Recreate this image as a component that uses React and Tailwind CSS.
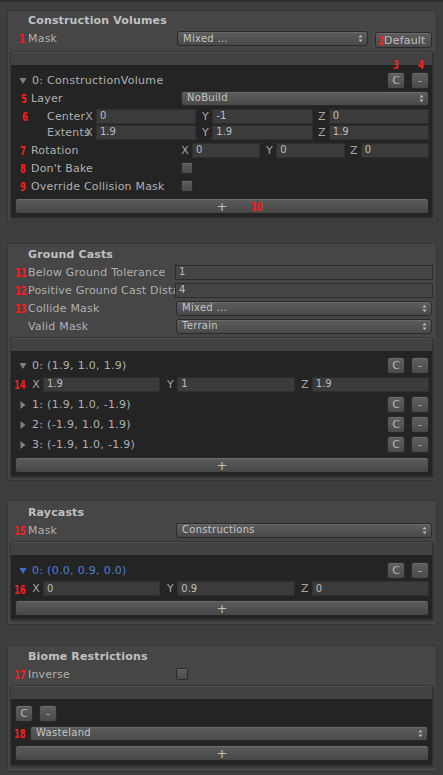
import React from 'react';

const redFont = "font-bold text-[#ff1a1a] font-['DejaVu_Sans_Condensed','Liberation_Sans_Narrow',sans-serif] scale-x-[0.72] origin-left";

function Num({ n, className = '' }) {
  return (
    <span className={`absolute top-1/2 -translate-y-1/2 text-[13px] leading-none ${redFont} ${className}`}>
      {n}
    </span>
  );
}

function Arrows() {
  return (
    <svg width="5" height="9" viewBox="0 0 5 9" className="shrink-0">
      <path d="M0.5 3.5 L2.5 0.8 L4.5 3.5Z M0.5 5.5 L2.5 8.2 L4.5 5.5Z" fill="#b8b8b8" />
    </svg>
  );
}

function Dropdown({ text, className = '' }) {
  return (
    <div className={`flex items-center justify-between h-[15px] pl-[5px] pr-[4px] rounded-[3px] border border-[#2a2a2a] bg-linear-to-b from-[#5d5d5d] to-[#4a4a4a] shadow-[inset_0_1px_0_#6a6a6a] text-[10px] tracking-[0.3px] text-[#c4c4c4] ${className}`}>
      <span className="truncate leading-none">{text}</span>
      <Arrows />
    </div>
  );
}

function Btn({ children, className = '' }) {
  return (
    <div className={`flex items-center justify-center w-[18px] h-[17px] rounded-[3px] border border-[#2a2a2a] bg-linear-to-b from-[#5f5f5f] to-[#4b4b4b] shadow-[inset_0_1px_0_#6c6c6c] text-[11px] text-[#b5b5b5] leading-none ${className}`}>
      {children}
    </div>
  );
}

function Field({ value, className = '', light }) {
  return (
    <div className={`flex items-center h-[15px] pl-[3px] border text-[10px] text-[#bebebe] leading-none ${light ? 'bg-[#454545] border-[#2c2c2c]' : 'bg-[#3b3b3b] border-[#2f2f2f]'} ${className}`}>
      {value}
    </div>
  );
}

function Check({ className = '' }) {
  return (
    <div className={`w-[12px] h-[12px] rounded-[2px] border border-[#2a2a2a] bg-linear-to-b from-[#5c5c5c] to-[#4a4a4a] shadow-[inset_0_1px_0_#6a6a6a] ${className}`} />
  );
}

function Vec3({ values, className = '', gap = 'gap-[2px]' }) {
  return (
    <div className={`flex ${gap} ${className}`}>
      {['X', 'Y', 'Z'].map((a, i) => (
        <div key={a} className="flex-1 flex items-center min-w-0">
          <span className="w-[14px] shrink-0 text-center text-[11px] text-[#a6a6a6] leading-none">{a}</span>
          <Field value={values[i]} className="flex-1 min-w-0" />
        </div>
      ))}
    </div>
  );
}

function Tri({ open, blue }) {
  return (
    <svg width="8" height="8" viewBox="0 0 8 8" className="shrink-0">
      {open ? (
        <path d="M0.5 1 L7.5 1 L4 7Z" fill={blue ? '#3f6fd8' : '#808080'} />
      ) : (
        <path d="M1.5 0 L6.5 4 L1.5 8Z" fill="#808080" />
      )}
    </svg>
  );
}

function Plus({ className = '', children }) {
  return (
    <div className={`relative mx-[4px] mr-[3px] h-[16px] flex items-center justify-center rounded-[3px] border border-[#262626] bg-linear-to-b from-[#5c5c5c] to-[#474747] shadow-[inset_0_1px_0_#6a6a6a] text-[13px] text-[#c0c0c0] leading-none ${className}`}>
      +
      {children}
    </div>
  );
}

function Section({ title, className = '', children }) {
  return (
    <div className={`ml-[7px] mr-[6px] border border-[#363636] bg-[#464646] ${className}`}>
      <div className="pl-[20px] h-[14px] flex items-center font-bold text-[11px] tracking-[0.15px] text-[#c0c0c0] leading-none title-row">
        {title}
      </div>
      {children}
    </div>
  );
}

function Inner({ className = '', children }) {
  return (
    <div className={`relative ml-[2px] mr-[3px] rounded-t-[3px] border border-[#353535] bg-[#242424] shadow-[1px_1px_2px_rgba(0,0,0,0.35)] ${className}`}>
      <div className="h-[13px] bg-[#424242] rounded-t-[2px] border-t border-[#4e4e4e]" />
      {children}
    </div>
  );
}

function SRow({ label, num, numClass, className = '', children }) {
  return (
    <div className={`relative flex items-center h-[16px] pl-[20px] pr-[4px] ${className}`}>
      {num && <Num n={num} className={numClass} />}
      <span className="w-[148px] shrink-0 overflow-hidden whitespace-nowrap text-[11px] tracking-[0.2px] text-[#b0b0b0] leading-none">{label}</span>
      {children}
    </div>
  );
}

function IRow({ label, num, numClass = 'left-[9px]', className = '', labelClass = 'w-[150px]', pl = 'pl-[20px]', children }) {
  return (
    <div className={`relative flex items-center h-[16px] ${pl} pr-[3px] ${className}`}>
      {num && <Num n={num} className={numClass} />}
      <span className={`${labelClass} shrink-0 whitespace-nowrap text-[11px] tracking-[0.2px] text-[#b0b0b0] leading-none`}>{label}</span>
      {children}
    </div>
  );
}

function ElemRow({ text, open, blue, className = '', buttons = true }) {
  return (
    <div className={`flex items-center h-[17px] pl-[8px] pr-[3px] ${className}`}>
      <Tri open={open} blue={blue} />
      <span className={`ml-[5px] flex-1 text-[11px] tracking-[0.3px] leading-none ${blue ? 'text-[#4f7fdc]' : 'text-[#b0b0b0]'}`}>{text}</span>
      {buttons && (
        <div className="flex gap-[6px]">
          <Btn>C</Btn>
          <Btn>-</Btn>
        </div>
      )}
    </div>
  );
}

export default function App() {
  return (
    <div className="min-h-[775px] w-[443px] bg-[#3e3e3e] border-t-2 border-[#2d2d2d] pt-[8px] pb-[3px] font-['DejaVu_Sans','Liberation_Sans',sans-serif] overflow-hidden">
      {/* Construction Volumes */}
      <Section title="Construction Volumes" className="[&>.title-row]:mt-[2px]">
        <div className="relative flex items-start h-[18px] mt-[2px] pl-[20px] pr-[4px]">
          <Num n="1" className="left-[11px] top-[9px]" />
          <span className="w-[149px] shrink-0 mt-[4px] text-[11px] tracking-[0.2px] text-[#b0b0b0] leading-none">Mask</span>
          <Dropdown text="Mixed ..." className="flex-1 mt-[2px]" />
          <div className="ml-[7px] w-[57px] h-[16px] mt-[3px] flex items-center pl-[2px] rounded-[3px] border border-[#2a2a2a] bg-linear-to-b from-[#5d5d5d] to-[#4a4a4a] shadow-[inset_0_1px_0_#6a6a6a] text-[11px] text-[#c0c0c0] leading-none">
            <span className="w-[6px] overflow-visible text-[13px] inline-block font-bold text-[#ff1a1a] font-['DejaVu_Sans_Condensed',sans-serif] scale-x-[0.72] origin-left">2</span>
            <span className="tracking-[0.2px]">Default</span>
          </div>
        </div>
        <Inner className="mt-[4px] pb-[3px]">
          <span className={`absolute left-[382px] top-[6px] text-[13px] leading-none ${redFont}`}>3</span>
          <span className={`absolute left-[407px] top-[6px] text-[13px] leading-none ${redFont}`}>4</span>
          <ElemRow text="0: ConstructionVolume" open className="mt-[7px]" />
          <IRow label="Layer" num="5" numClass="left-[10px]" className="mt-[1px]">
            <Dropdown text="NoBuild" className="flex-1" />
          </IRow>
          <IRow label="Center" num="6" numClass="left-[11px]" pl="pl-[36px]" labelClass="w-[35px]" className="mt-[2px]">
            <Vec3 values={['0', '-1', '0']} className="flex-1" />
          </IRow>
          <IRow label="Extents" pl="pl-[36px]" labelClass="w-[35px]">
            <Vec3 values={['1.9', '1.9', '1.9']} className="flex-1" />
          </IRow>
          <IRow label="Rotation" num="7" labelClass="w-[147px]" className="mt-[2px]">
            <Vec3 values={['0', '0', '0']} className="flex-1" />
          </IRow>
          <IRow label="Don't Bake" num="8" className="mt-[2px]">
            <Check />
          </IRow>
          <IRow label="Override Collision Mask" num="9" className="mt-[2px]">
            <Check />
          </IRow>
          <Plus className="mt-[4px]">
            <span className={`absolute left-[235px] top-1/2 -translate-y-1/2 text-[13px] leading-none ${redFont}`}>10</span>
          </Plus>
        </Inner>
        <div className="h-[3px]" />
      </Section>

      {/* Ground Casts */}
      <Section title="Ground Casts" className="mt-[21px] [&>.title-row]:mt-[3px]">
        <div className="flex flex-col gap-[2px] mt-[3px]">
          <SRow label="Below Ground Tolerance" num="11" numClass="left-[7px]">
            <Field value="1" light className="flex-1 -ml-[1px] -mr-[1px]" />
          </SRow>
          <SRow label="Positive Ground Cast Distance" num="12" numClass="left-[7px]">
            <Field value="4" light className="flex-1 -ml-[1px] -mr-[1px]" />
          </SRow>
          <SRow label="Collide Mask" num="13" numClass="left-[7px]">
            <Dropdown text="Mixed ..." className="flex-1" />
          </SRow>
          <SRow label="Valid Mask">
            <Dropdown text="Terrain" className="flex-1" />
          </SRow>
        </div>
        <Inner className="mt-[3px] pb-[3px]">
          <ElemRow text="0: (1.9, 1.0, 1.9)" open className="mt-[6px]" />
          <div className="relative flex items-center h-[16px] mt-[2px] pl-[18px] pr-[3px]">
            <Num n="14" className="left-[3px]" />
            <Vec3 values={['1.9', '1', '1.9']} gap="gap-[3px]" className="flex-1" />
          </div>
          <ElemRow text="1: (1.9, 1.0, -1.9)" className="mt-[4px]" />
          <ElemRow text="2: (-1.9, 1.0, 1.9)" className="mt-[3px]" />
          <ElemRow text="3: (-1.9, 1.0, -1.9)" className="mt-[3px]" />
          <Plus className="mt-[4px]" />
        </Inner>
        <div className="h-[3px]" />
      </Section>

      {/* Raycasts */}
      <Section title="Raycasts" className="mt-[19px] [&>.title-row]:mt-[4px]">
        <SRow label="Mask" num="15" numClass="left-[6px]" className="mt-[3px]">
          <Dropdown text="Constructions" className="flex-1" />
        </SRow>
        <Inner className="mt-[3px] pb-[3px]">
          <ElemRow text="0: (0.0, 0.9, 0.0)" open blue className="mt-[7px]" />
          <div className="relative flex items-center h-[15px] mt-[2px] pl-[18px] pr-[3px]">
            <Num n="16" className="left-[3px]" />
            <Vec3 values={['0', '0.9', '0']} gap="gap-[3px]" className="flex-1" />
          </div>
          <Plus className="mt-[4px]" />
        </Inner>
        <div className="h-[4px]" />
      </Section>

      {/* Biome Restrictions */}
      <Section title="Biome Restrictions" className="mt-[20px] [&>.title-row]:mt-[3px]">
        <SRow label="Inverse" num="17" numClass="left-[6px]" className="mt-[3px]">
          <Check />
        </SRow>
        <Inner className="mt-[3px] pb-[4px]">
          <div className="flex gap-[6px] pl-[4px] mt-[6px]">
            <Btn>C</Btn>
            <Btn>-</Btn>
          </div>
          <div className="relative flex items-center h-[14px] mt-[4px] pl-[19px] pr-[4px]">
            <Num n="18" className="left-[3px]" />
            <Dropdown text="Wasteland" className="flex-1 h-[14px]" />
          </div>
          <Plus className="mt-[5px]" />
        </Inner>
        <div className="h-[5px]" />
      </Section>
    </div>
  );
}
